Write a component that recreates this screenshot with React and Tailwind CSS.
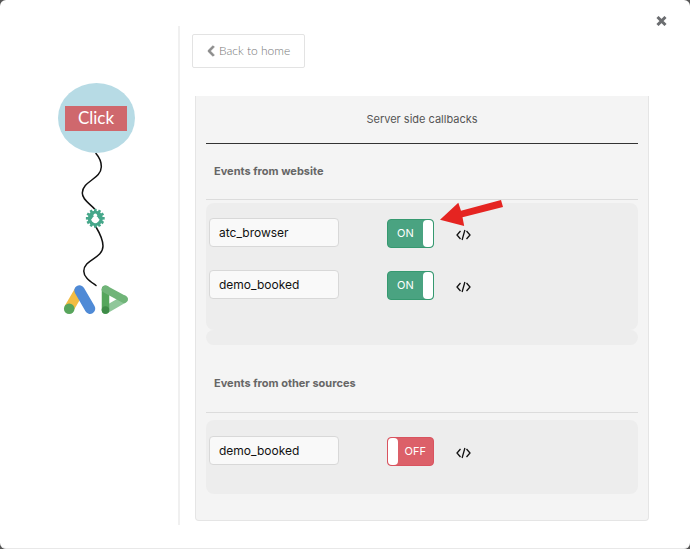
import React, { useState } from 'react';
import { FaChevronLeft } from 'react-icons/fa';

const websiteEvents = [
  { id: 1, name: 'atc_browser', active: true, highlighted: true },
  { id: 2, name: 'demo_booked', active: true },
];

const otherEvents = [{ id: 3, name: 'demo_booked', active: false }];

const teeth = [0, 30, 60, 90, 120, 150, 180, 210, 240, 270, 300, 330];

function FlowDrawing() {
  return (
    <svg width="90" height="165" viewBox="51 153 90 165" fill="none" aria-hidden="true">
      <g stroke="#111" strokeWidth="1.500" strokeLinecap="round">
        <path d="M96 153.500C99 157 101.500 161 101.300 167C101 179 82.500 181 82.300 193C82.200 200 90 203.500 95.500 210" />
        <path d="M96 227C99 232 103 239 103 246C102.800 259 84 259 83.800 271C83.700 277 90 281 96 285.500" />
      </g>

      {/* gear */}
      <g fill="#45a78a">
        <circle cx="95.300" cy="218.300" r="7.600" />
        {teeth.map(deg => (
          <rect key={deg} x="94" y="208.900" width="2.600" height="3.600" transform={`rotate(${deg} 95.300 218.300)`} />
        ))}
      </g>
      <g fill="#fff">
        <ellipse cx="95.300" cy="219.600" rx="3" ry="3.600" />
        <circle cx="95.300" cy="215.200" r="1.800" />
        <path d="M91 219.700L93 217.500H97.600L99.600 219.700L98 222H92.600Z" />
      </g>

      {/* ads logo */}
      <path d="M69 308.500L79.500 290.500" stroke="#f2bc42" strokeWidth="10" />
      <path d="M79.500 290.500L90 308.700" stroke="#4f8ad6" strokeWidth="10.500" strokeLinecap="round" />
      <circle cx="69.200" cy="308.700" r="5.300" fill="#58a55c" />

      {/* play logo */}
      <path d="M105.500 310L124 299.300" stroke="#8fc79a" strokeWidth="7.500" strokeLinecap="round" />
      <path d="M105.500 289.300V310" stroke="#55a65c" strokeWidth="7.500" strokeLinecap="round" />
      <path d="M105.500 289.300L124 299.300" stroke="#70b478" strokeWidth="7.500" strokeLinecap="round" />
      <circle cx="105.500" cy="310" r="3.750" fill="#3f8c48" />
    </svg>
  );
}

function Toggle({ label, checked, onChange }) {
  return (
    <label className="relative block h-[29px] w-[47px] text-[11px] text-white">
      <input
        type="checkbox"
        aria-label={label}
        checked={checked}
        onChange={onChange}
        className="block h-full w-full appearance-none rounded border border-[#d9535f] bg-[#dc6069] checked:border-[#369970] checked:bg-[#4aa381]"
      />
      <span
        className={
          checked
            ? 'pointer-events-none absolute inset-0 flex items-center justify-between pr-px pl-2.5'
            : 'pointer-events-none absolute inset-0 flex flex-row-reverse items-center justify-between pr-2 pl-px'
        }
      >
        {checked ? 'ON' : 'OFF'}
        <span className="h-[27px] w-2.5 rounded bg-white" />
      </span>
    </label>
  );
}

function EventRow({ event, onRename, onToggle }) {
  return (
    <div className="flex items-start">
      <input
        type="text"
        aria-label="Event name"
        value={event.name}
        onChange={e => onRename(event.id, e.target.value)}
        className="h-[29px] w-[130px] rounded border border-[#d8d8d8] bg-[#f9f9f9] px-[9px] text-xs text-[#111]"
      />
      <div className="relative mt-px ml-12 flex items-center">
        <Toggle label={`${event.name} callback`} checked={event.active} onChange={() => onToggle(event.id)} />
        <button type="button" aria-label="Show code" className="mt-0.5 ml-[22px] text-[#111]">
          <svg width="15" height="12" viewBox="0 0 15 12" fill="none" stroke="currentColor" strokeWidth="1.300">
            <path d="M4.500 2L1 6L4.500 10M10.500 2L14 6L10.500 10M8.900 1L6.100 11" />
          </svg>
        </button>
        {event.highlighted && (
          <svg className="pointer-events-none absolute -top-5 left-[52px]" width="66" height="28" viewBox="439 200 66 28" aria-hidden="true">
            <path d="M440 220.700L458.300 203.700L461 211.800L501 201L503 208L462.500 218.300L464.200 227Z" fill="#e52421" />
          </svg>
        )}
      </div>
    </div>
  );
}

export default function App() {
  const [events, setEvents] = useState([...websiteEvents, ...otherEvents]);

  const handleRename = (id, name) => {
    setEvents(events.map(e => (e.id === id ? { ...e, name } : e)));
  };

  const handleToggle = (id) => {
    setEvents(events.map(e => (e.id === id ? { ...e, active: !e.active } : e)));
  };

  const renderRow = e => <EventRow key={e.id} event={e} onRename={handleRename} onToggle={handleToggle} />;

  return (
    <div className="min-h-screen bg-[#555] font-['Inter',sans-serif]">
      <div role="dialog" aria-label="Callbacks" className="relative flex min-h-screen rounded-md border-b border-[#e8e8e8] bg-white pt-[26px] pb-[23px]">
        <button type="button" aria-label="Close" className="absolute top-4 right-[23px] text-[#6b6d70]">
          <svg width="11" height="10" viewBox="0 0 11 10" stroke="currentColor" strokeWidth="3">
            <path d="M1.500 1L9.500 9M9.500 1L1.500 9" />
          </svg>
        </button>

        <aside className="flex w-[180px] shrink-0 flex-col items-center border-r-2 border-[#f0f0f0] pt-[57px] pl-[14px]">
          <div className="flex h-[70px] w-[77px] items-center justify-center rounded-[50%] bg-[#b7dbe5]">
            <span className="flex h-[25px] w-[62px] items-center justify-center bg-[#cf686d] font-['Lato',sans-serif] text-[17px] text-white">
              Click
            </span>
          </div>
          <FlowDrawing />
        </aside>

        <main className="min-w-0 flex-1 pt-2 pr-[41px] pl-3">
          <button
            type="button"
            className="flex h-[34px] items-center gap-1 rounded-xs border border-[#e3e3e3] px-3.5 font-['Lato',sans-serif] text-xs font-light text-[#777]"
          >
            <FaChevronLeft className="h-3 w-2 text-[#8c8c8c]" strokeWidth="40" stroke="currentColor" />
            Back to home
          </button>

          <div className="mt-7 ml-[3px] rounded-b border border-t-0 border-[#e5e5e5] bg-[#f4f4f4] px-2.5 pb-[26px]">
            <h1 className="flex h-12 items-center justify-center border-b border-[#333] text-[11px] text-[#555]">
              Server side callbacks
            </h1>

            <section>
              <h2 className="flex h-14 items-center border-b border-[#dcdcdc] px-2 text-[11px] font-bold text-[#666]">
                Events from website
              </h2>
              <div className="mt-[3px] flex h-[127px] flex-col gap-[22px] rounded-lg bg-[#ededed] px-[3px] pt-[15px]">
                {events.slice(0, 2).map(renderRow)}
              </div>
              <div className="h-[15px] rounded-lg bg-[#ededed]" />
            </section>

            <section className="pt-2.5">
              <h2 className="flex h-[58px] items-center border-b border-[#dcdcdc] px-2 text-[11px] font-bold text-[#666]">
                Events from other sources
              </h2>
              <div className="mt-[7px] h-[74px] rounded-lg bg-[#ededed] px-[3px] pt-4">
                {events.slice(2).map(renderRow)}
              </div>
            </section>
          </div>
        </main>
      </div>
    </div>
  );
}
